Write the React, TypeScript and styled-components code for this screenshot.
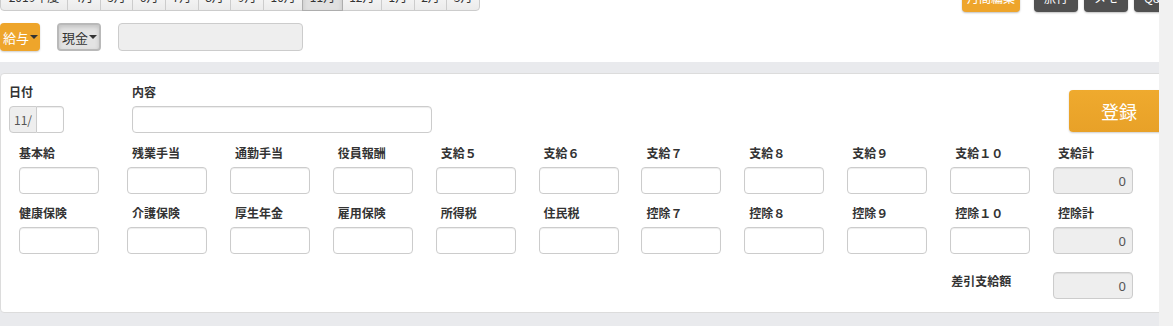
import React from "react";
import styled, { createGlobalStyle } from "styled-components";

const GlobalStyle = createGlobalStyle`
  html, body {
    margin: 0;
    padding: 0;
    background: #fff;
    overflow: hidden;
  }
  body {
    font-family: "Noto Sans CJK JP", "Noto Sans", sans-serif;
    font-size: 12px;
    color: #333;
  }
  * {
    box-sizing: border-box;
  }
`;

const months = ["4月", "5月", "6月", "7月", "8月", "9月", "10月", "11月", "12月", "1月", "2月", "3月"];

const payFields = ["基本給", "残業手当", "通勤手当", "役員報酬", "支給５", "支給６", "支給７", "支給８", "支給９", "支給１０"];
const deductFields = ["健康保険", "介護保険", "厚生年金", "雇用保険", "所得税", "住民税", "控除７", "控除８", "控除９", "控除１０"];

function App() {
  return (
    <Screen>
      <GlobalStyle />
      <Main>
        <TopBar>
          <MonthGroup>
            <MonthTab $first>2019年度</MonthTab>
            {months.map((m, i) => (
              <MonthTab key={m} $active={m === "11月"} $last={i === months.length - 1}>
                {m}
              </MonthTab>
            ))}
          </MonthGroup>
          <ActionGroup>
            <ActionButton $tone="orange">月間編集</ActionButton>
            <ActionButton $tone="dark">旅行</ActionButton>
            <ActionButton $tone="dark">メモ</ActionButton>
            <ActionButton $tone="dark">Q&amp;A</ActionButton>
          </ActionGroup>
        </TopBar>

        <ToolRow>
          <DropButton $tone="orange">
            給与<Caret />
          </DropButton>
          <DropButton $tone="pressed">
            現金<Caret />
          </DropButton>
          <SearchBox disabled />
        </ToolRow>

        <Section>
          <Panel>
            <HeadRow>
              <div>
                <Label>日付</Label>
                <DateGroup>
                  <Addon>11/</Addon>
                  <DayInput />
                </DateGroup>
              </div>
              <div>
                <Label>内容</Label>
                <TextInput $width={300} />
              </div>
              <RegisterButton>登録</RegisterButton>
            </HeadRow>

            <FieldGrid>
              {payFields.map((f, i) => (
                <div key={f}>
                  <Label $indent={i === 0 ? 0 : 5}>{f}</Label>
                  <TextInput $width={80} />
                </div>
              ))}
              <div>
                <Label $indent={5}>支給計</Label>
                <TotalInput disabled value="0" readOnly />
              </div>
            </FieldGrid>

            <FieldGrid $gap={10}>
              {deductFields.map((f, i) => (
                <div key={f}>
                  <Label $indent={i === 0 ? 0 : 5}>{f}</Label>
                  <TextInput $width={80} />
                </div>
              ))}
              <div>
                <Label $indent={5}>控除計</Label>
                <TotalInput disabled value="0" readOnly />
              </div>
            </FieldGrid>

            <FieldGrid $gap={18}>
              <NetLabel>差引支給額</NetLabel>
              <TotalInput disabled value="0" readOnly />
            </FieldGrid>
          </Panel>
        </Section>
      </Main>
      <ScrollTrack />
    </Screen>
  );
}

export default App;

const Screen = styled.div`
  display: flex;
  height: 326px;
  overflow: hidden;
`;

const Main = styled.div`
  flex: 1;
  min-width: 0;
  overflow: hidden;
`;

const ScrollTrack = styled.div`
  width: 14px;
  flex-shrink: 0;
  background: #f1f1f1;
`;

const TopBar = styled.div`
  display: flex;
  align-items: flex-start;
  margin-top: -19px;
  height: 30px;
`;

const MonthGroup = styled.div`
  display: flex;
  flex-shrink: 0;
  width: 480px;
`;

const MonthTab = styled.button<{ $active?: boolean; $first?: boolean; $last?: boolean }>`
  flex: ${(p) => (p.$first ? "0 0 68px" : "1 1 auto")};
  height: 30px;
  padding: 0 4px;
  margin-left: ${(p) => (p.$first ? "0" : "-1px")};
  font-family: inherit;
  font-size: 12px;
  color: #333;
  border: 1px solid ${(p) => (p.$active ? "#adadad" : "#ccc")};
  border-radius: ${(p) => (p.$first ? "4px 0 0 4px" : p.$last ? "0 4px 4px 0" : "0")};
  background: ${(p) => (p.$active ? "#e0e0e0" : "linear-gradient(#ffffff, #ebebeb)")};
  box-shadow: ${(p) => (p.$active ? "inset 0 3px 5px rgba(0,0,0,0.125)" : "none")};
  position: relative;
  z-index: ${(p) => (p.$active ? 1 : 0)};
`;

const ActionGroup = styled.div`
  display: flex;
  flex-shrink: 0;
  margin-left: 482px;
  margin-top: 1px;
`;

const ActionButton = styled.button<{ $tone: "orange" | "dark" }>`
  height: 30px;
  padding: 0 ${(p) => (p.$tone === "orange" ? "5px" : "10px")};
  margin-right: ${(p) => (p.$tone === "orange" ? "14px" : "6px")};
  font-family: inherit;
  font-size: 12px;
  color: #fff;
  border: none;
  border-radius: 4px;
  background: ${(p) => (p.$tone === "orange" ? "#eea52b" : "#505050")};
  box-shadow: 0 1px 2px rgba(0, 0, 0, 0.25);
  white-space: nowrap;
`;

const ToolRow = styled.div`
  display: flex;
  align-items: center;
  margin-top: 12px;
  height: 28px;
`;

const DropButton = styled.button<{ $tone: "orange" | "pressed" }>`
  display: flex;
  align-items: center;
  height: 28px;
  padding: 0 2px 0 3px;
  margin-right: 17px;
  font-family: inherit;
  font-size: 13px;
  border-radius: 4px;
  color: ${(p) => (p.$tone === "orange" ? "#fff" : "#333")};
  background: ${(p) => (p.$tone === "orange" ? "#eea52b" : "#e3e3e3")};
  border: ${(p) => (p.$tone === "orange" ? "none" : "2px solid #b9b9b9")};
  box-shadow: ${(p) =>
    p.$tone === "orange" ? "0 1px 2px rgba(0,0,0,0.2)" : "inset 0 2px 4px rgba(0,0,0,0.15)"};
`;

const Caret = styled.span`
  display: inline-block;
  width: 0;
  height: 0;
  margin-left: 1px;
  border-top: 4px solid #333;
  border-left: 4px solid transparent;
  border-right: 4px solid transparent;
`;

const SearchBox = styled.input`
  width: 185px;
  height: 28px;
  background: #eee;
  border: 1px solid #ccc;
  border-radius: 4px;
`;

const Section = styled.div`
  margin-top: 11px;
  padding: 11px 0 13px;
  background: #e9eaed;
  width: 1200px;
`;

const Panel = styled.div`
  background: #fff;
  border: 1px solid #dcdcdc;
  border-radius: 4px;
  padding: 9px 0 13px 0;
`;

const HeadRow = styled.div`
  display: grid;
  grid-template-columns: 123px 300px 637px 110px;
  padding-left: 8px;
  align-items: start;
`;

const Label = styled.div<{ $indent?: number }>`
  height: 18px;
  line-height: 18px;
  margin-bottom: 5px;
  padding-left: ${(p) => p.$indent ?? 0}px;
  font-weight: bold;
  font-size: 12px;
  color: #333;
  white-space: nowrap;
`;

const NetLabel = styled(Label)`
  grid-column: 10;
  padding-left: 1px;
`;

const DateGroup = styled.div`
  display: flex;
  height: 27px;
`;

const Addon = styled.span`
  width: 28px;
  display: flex;
  align-items: center;
  justify-content: center;
  font-size: 12px;
  color: #555;
  background: #eee;
  border: 1px solid #ccc;
  border-radius: 4px 0 0 4px;
`;

const DayInput = styled.input`
  width: 27px;
  height: 27px;
  border: 1px solid #ccc;
  border-left: none;
  border-radius: 0 4px 4px 0;
  box-shadow: inset 0 1px 1px rgba(0, 0, 0, 0.075);
`;

const TextInput = styled.input<{ $width: number }>`
  display: block;
  width: ${(p) => p.$width}px;
  height: 27px;
  border: 1px solid #ccc;
  border-radius: 4px;
  box-shadow: inset 0 1px 1px rgba(0, 0, 0, 0.075);
  background: #fff;
`;

const TotalInput = styled.input`
  display: block;
  width: 80px;
  height: 27px;
  padding: 0 6px;
  text-align: right;
  font-family: "Noto Sans", sans-serif;
  font-size: 13px;
  color: #555;
  background: #eee;
  border: 1px solid #ccc;
  border-radius: 4px;
  box-shadow: inset 0 1px 1px rgba(0, 0, 0, 0.075);
  opacity: 1;
  -webkit-text-fill-color: #555;
`;

const RegisterButton = styled.button`
  grid-column: 4;
  width: 100px;
  height: 42px;
  margin-top: 7px;
  font-family: inherit;
  font-size: 18px;
  color: #fff;
  border: none;
  border-radius: 4px;
  background: linear-gradient(#efaa2e, #e8a128);
  box-shadow: 0 1px 2px rgba(0, 0, 0, 0.2);
`;

const FieldGrid = styled.div<{ $gap?: number }>`
  display: grid;
  grid-template-columns: 108px repeat(10, 102.9px);
  padding-left: 18px;
  margin-top: ${(p) => p.$gap ?? 11}px;
  align-items: start;
`;
